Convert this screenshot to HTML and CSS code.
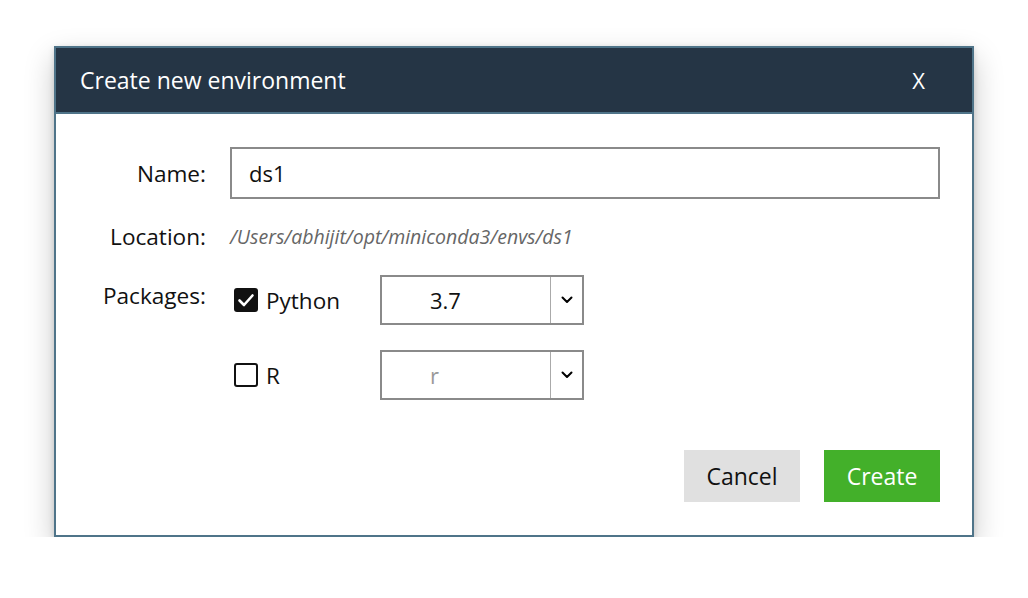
FILE: index.html
```html
<!DOCTYPE html>
<html>
<head>
<meta charset="utf-8">
<link rel="stylesheet" href="styles.css">
</head>
<body>
<div class="dialog">
  <div class="dialog-header">
    <span class="dialog-title">Create new environment</span>
    <span class="dialog-close">X</span>
  </div>
  <div class="dialog-body">
    <div class="form-row row-name">
      <label class="form-label">Name:</label>
      <div class="name-input">ds1</div>
    </div>
    <div class="form-row row-location">
      <label class="form-label">Location:</label>
      <span class="location-path">/Users/abhijit/opt/miniconda3/envs/ds1</span>
    </div>
    <div class="form-row row-packages">
      <label class="form-label label-packages">Packages:</label>
      <div class="packages">
        <div class="package">
          <div class="pkg-check">
            <span class="checkbox checked">
              <svg viewBox="0 0 24 24" width="24" height="24"><path d="M5.5 12.5 L10 17 L18.5 7.5" fill="none" stroke="#fff" stroke-width="2.6" stroke-linecap="round" stroke-linejoin="round"/></svg>
            </span>
            <span class="pkg-name">Python</span>
          </div>
          <div class="select">
            <span class="select-value">3.7</span>
            <span class="select-arrow">
              <svg viewBox="0 0 12 8" width="12" height="8"><path d="M1.5 1.5 L6 6 L10.5 1.5" fill="none" stroke="#000" stroke-width="2" stroke-linecap="round" stroke-linejoin="round"/></svg>
            </span>
          </div>
        </div>
        <div class="package">
          <div class="pkg-check">
            <span class="checkbox"></span>
            <span class="pkg-name">R</span>
          </div>
          <div class="select">
            <span class="select-value muted">r</span>
            <span class="select-arrow">
              <svg viewBox="0 0 12 8" width="12" height="8"><path d="M1.5 1.5 L6 6 L10.5 1.5" fill="none" stroke="#000" stroke-width="2" stroke-linecap="round" stroke-linejoin="round"/></svg>
            </span>
          </div>
        </div>
      </div>
    </div>
    <div class="actions">
      <button class="btn btn-cancel">Cancel</button>
      <button class="btn btn-create">Create</button>
    </div>
  </div>
</div>
</body>
</html>
```
FILE: styles.css
```css
html, body {
  margin: 0;
  padding: 0;
  background: #ffffff;
}
body {
  padding: 46px 0 0 54px;
  font-family: "Open Sans", "Noto Sans", sans-serif;
  color: #111;
}
.dialog {
  width: 916px;
  border: 2px solid #4f7489;
  background: #fff;
  box-shadow: 0 12px 28px rgba(0,0,0,0.22), 0 2px 6px rgba(0,0,0,0.15);
}
.dialog-header {
  height: 64px;
  background: #253545;
  border-bottom: 2px solid #4f7489;
  display: flex;
  align-items: center;
  justify-content: space-between;
  padding: 0 47px 0 24px;
  color: #fff;
}
.dialog-title {
  font-size: 23px;
}
.dialog-close {
  font-size: 22px;
}
.dialog-body {
  padding: 33px 32px 33px 0;
}
.form-row {
  display: flex;
  align-items: center;
}
.form-label {
  width: 150px;
  text-align: right;
  margin-right: 24px;
  font-size: 22.6px;
  color: #111;
  flex-shrink: 0;
}
.row-name {
  height: 52px;
}
.name-input {
  flex: 1;
  height: 48px;
  border: 2px solid #8a8a8a;
  display: flex;
  align-items: center;
  padding-left: 17px;
  font-size: 22px;
  color: #111;
}
.row-location {
  height: 40px;
  margin-top: 17px;
}
.location-path {
  font-style: italic;
  font-size: 19.5px;
  color: #666;
}
.row-packages {
  margin-top: 19px;
  align-items: flex-start;
}
.label-packages {
  margin-top: 5px;
}
.packages {
  display: flex;
  flex-direction: column;
  gap: 25px;
}
.package {
  display: flex;
  align-items: center;
}
.pkg-check {
  width: 150px;
  display: flex;
  align-items: center;
  gap: 8px;
  padding-left: 4px;
  box-sizing: border-box;
}
.checkbox {
  width: 24px;
  height: 24px;
  box-sizing: border-box;
  border: 2px solid #111;
  border-radius: 3px;
  display: inline-flex;
  align-items: center;
  justify-content: center;
}
.checkbox.checked {
  background: #111;
  border: none;
}
.pkg-name {
  font-size: 22.5px;
}
.select {
  width: 204px;
  height: 50px;
  box-sizing: border-box;
  border: 2px solid #8a8a8a;
  display: flex;
  align-items: stretch;
}
.select-value {
  flex: 1;
  display: flex;
  align-items: center;
  padding-left: 48px;
  font-size: 22px;
  color: #111;
}
.select-value.muted {
  color: #999;
}
.select-arrow {
  width: 31px;
  border-left: 1px solid #aaa;
  display: flex;
  align-items: center;
  justify-content: center;
}
.actions {
  display: flex;
  justify-content: flex-end;
  gap: 24px;
  margin-top: 50px;
}
.btn {
  width: 116px;
  height: 52px;
  border: none;
  font-family: inherit;
  font-size: 23px;
  padding: 0;
}
.btn-cancel {
  background: #e0e0e0;
  color: #111;
}
.btn-create {
  background: #43b02a;
  color: #fff;
}
```
